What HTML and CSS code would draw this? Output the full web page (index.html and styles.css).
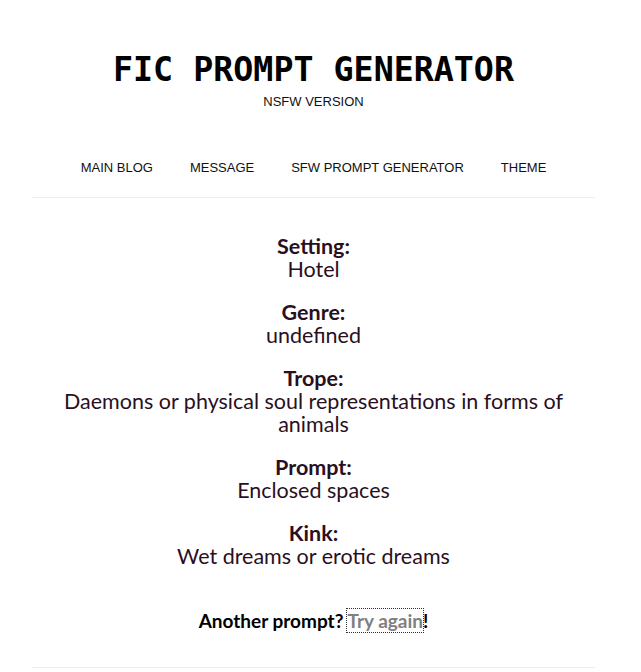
FILE: index.html
```html
<!DOCTYPE html>
<html lang="en">
<head>
    <meta charset="UTF-8">
    <meta name="viewport" content="width=device-width, initial-scale=1.0">
    <title>Fic Prompt Generator</title>
    <link rel="stylesheet" href="styles.css">
</head>
<body>
    <div class="wrap">
        <header class="header">
            <h1 class="title">FIC PROMPT GENERATOR</h1>
            <div class="subtitle">NSFW VERSION</div>
        </header>

        <nav class="nav">
            <a href="#">MAIN BLOG</a>
            <a href="#">MESSAGE</a>
            <a href="#">SFW PROMPT GENERATOR</a>
            <a href="#">THEME</a>
        </nav>

        <!-- resultado del generador -->
        <div class="prompt">
            <div class="item">
                <div class="label">Setting:</div>
                <div class="value">Hotel</div>
            </div>
            <div class="item">
                <div class="label">Genre:</div>
                <div class="value">undefined</div>
            </div>
            <div class="item">
                <div class="label">Trope:</div>
                <div class="value">Daemons or physical soul representations in forms of animals</div>
            </div>
            <div class="item">
                <div class="label">Prompt:</div>
                <div class="value">Enclosed spaces</div>
            </div>
            <div class="item">
                <div class="label">Kink:</div>
                <div class="value">Wet dreams or erotic dreams</div>
            </div>

            <p class="again">Another prompt? <a href="#" class="again-link">Try again</a>!</p>
        </div>
    </div>
</body>
</html>
```

FILE: styles.css
```css
body {
    margin: 0;
    background-color: #fff;
    font-family: Arial, "Liberation Sans", sans-serif;
}
.wrap {
    width: 563px;
    margin-left: 32px;
    border-bottom: 1px solid #eee;
    height: 667px;
}
.header {
    text-align: center;
    padding-top: 50px;
}
.title {
    margin: 0;
    font-family: "DejaVu Sans Mono", monospace;
    font-size: 33.3px;
    font-weight: bold;
    line-height: 40px;
    color: #000;
}
.subtitle {
    font-size: 13px;
    color: #111;
    margin-top: 4px;
}
.nav {
    display: flex;
    justify-content: center;
    padding: 51px 0 22px 0;
    border-bottom: 1px solid #eee;
}
.nav a {
    font-size: 13px;
    color: #111;
    text-decoration: none;
    padding: 0 18.5px;
}
.prompt {
    text-align: center;
    color: #2a0f1e;
    font-family: Lato, "Open Sans", sans-serif;
    padding-top: 37px;
}
.item {
    margin-bottom: 20px;
}
.label {
    font-weight: bold;
    font-size: 21.5px;
    line-height: 23px;
}
.value {
    font-size: 21.5px;
    line-height: 23px;
}
.again {
    margin: 41px 0 0 0;
    font-size: 19px;
    line-height: 23px;
    font-weight: bold;
    color: #000;
}
.again-link {
    color: #808080;
    text-decoration: none;
    outline: 1px dotted #333;
}
```
